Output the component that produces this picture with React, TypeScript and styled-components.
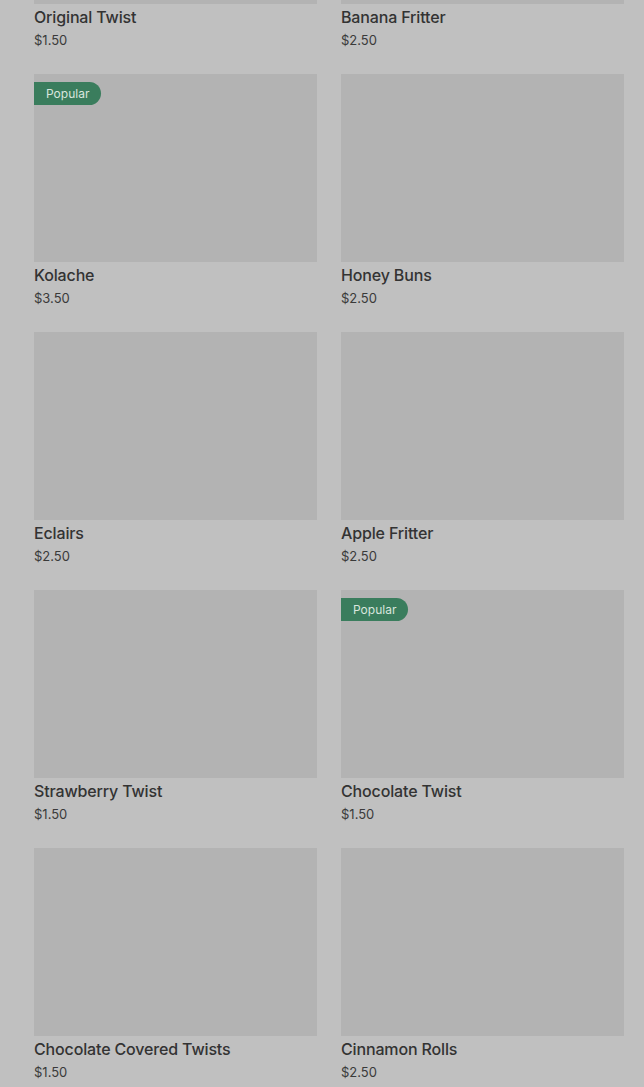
import React from 'react';
import styled, { createGlobalStyle } from 'styled-components';

const GlobalStyle = createGlobalStyle`
  html, body {
    margin: 0;
    padding: 0;
    background: #c0c0c0;
    font-family: Inter, "Noto Sans", "Liberation Sans", sans-serif;
  }
`

const Page = styled.main`
  overflow: hidden;
  height: 1087px;
`

const Grid = styled.div`
  display: grid;
  grid-template-columns: 283px 283px;
  column-gap: 24px;
  row-gap: 24px;
  padding: 0 20px 0 34px;
  margin-top: -184px;
`

const Card = styled.article`
  display: flex;
  flex-direction: column;
`

const Photo = styled.div`
  position: relative;
  height: 188px;
  background: #b3b3b3;
`

const Badge = styled.span`
  position: absolute;
  top: 8px;
  left: 0;
  height: 23px;
  padding: 0 12px;
  display: flex;
  align-items: center;
  background: #3a7d5d;
  color: #d9e6de;
  font-size: 12px;
  border-radius: 0 12px 12px 0;
`

const Name = styled.h3`
  margin: 2px 0 0;
  font-size: 16px;
  line-height: 22px;
  font-weight: 500;
  letter-spacing: -0.15px;
  color: #333333;
`

const Price = styled.div`
  margin-top: 2px;
  font-size: 13px;
  line-height: 20px;
  color: #3a3a3a;
`

type Item = { name: string; price: string; popular?: boolean };

const items: Item[] = [
  { name: 'Original Twist', price: '$1.50' },
  { name: 'Banana Fritter', price: '$2.50' },
  { name: 'Kolache', price: '$3.50', popular: true },
  { name: 'Honey Buns', price: '$2.50' },
  { name: 'Eclairs', price: '$2.50' },
  { name: 'Apple Fritter', price: '$2.50' },
  { name: 'Strawberry Twist', price: '$1.50' },
  { name: 'Chocolate Twist', price: '$1.50', popular: true },
  { name: 'Chocolate Covered Twists', price: '$1.50' },
  { name: 'Cinnamon Rolls', price: '$2.50' },
];

const App: React.FC = () => {
  return (
    <Page>
      <GlobalStyle />
      <Grid>
        {items.map((item) => (
          <Card key={item.name}>
            <Photo>{item.popular && <Badge>Popular</Badge>}</Photo>
            <Name>{item.name}</Name>
            <Price>{item.price}</Price>
          </Card>
        ))}
      </Grid>
    </Page>
  );
}

export default App;
